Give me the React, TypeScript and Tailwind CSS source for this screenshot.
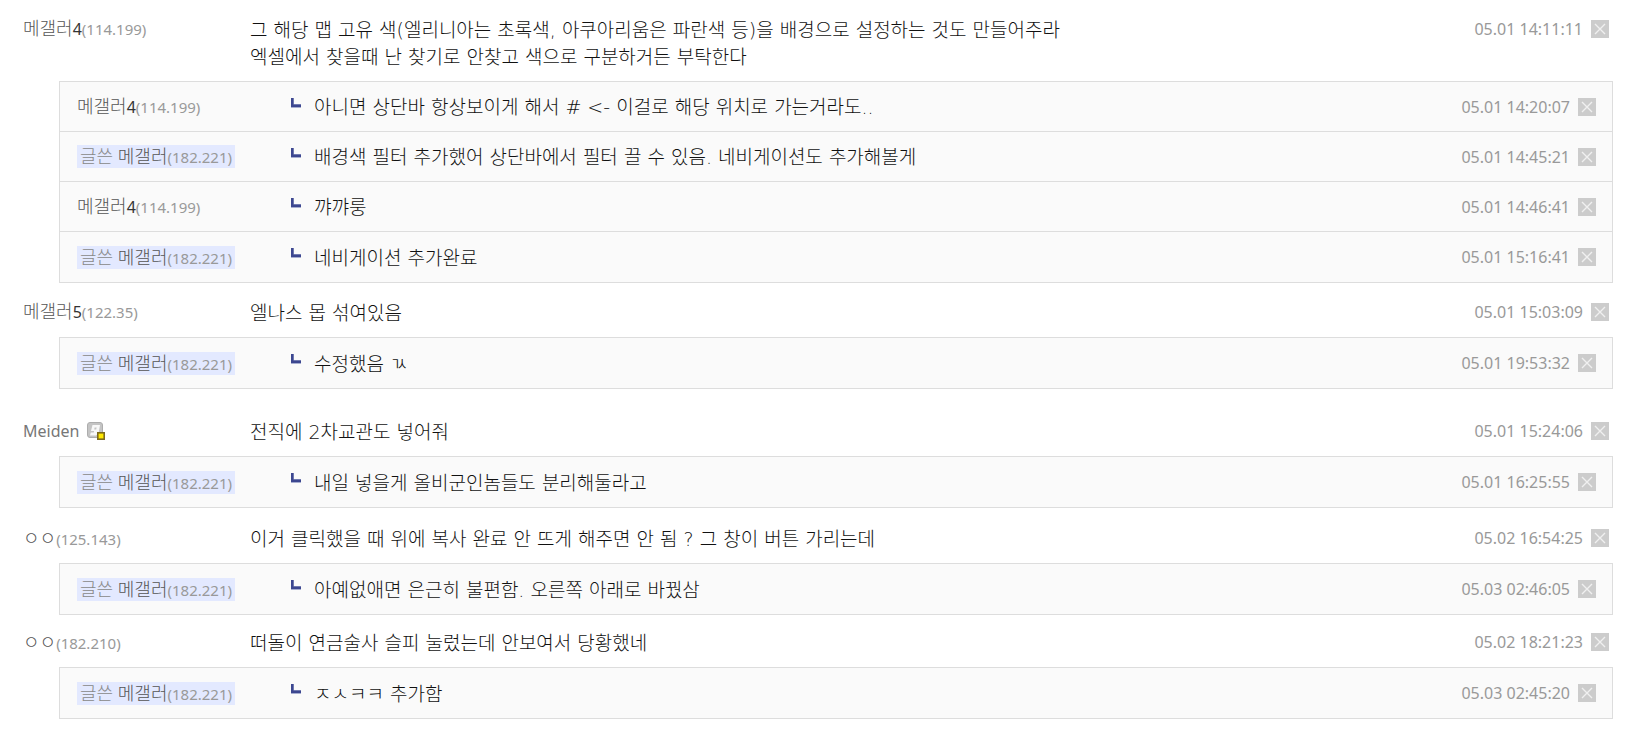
type Reply = {
  name: string;
  num?: string;
  ip: string;
  writer?: boolean;
  text: string;
  date: string;
};

type Comment = {
  name: string;
  num?: string;
  ip?: string;
  member?: boolean;
  lines: string[];
  date: string;
  space: string;
  replies: Reply[];
};

const comments: Comment[] = [
  {
    name: "메갤러",
    num: "4",
    ip: "(114.199)",
    lines: [
      "그 해당 맵 고유 색(엘리니아는 초록색, 아쿠아리움은 파란색 등)을 배경으로 설정하는 것도 만들어주라",
      "엑셀에서 찾을때 난 찾기로 안찾고 색으로 구분하거든 부탁한다",
    ],
    date: "05.01 14:11:11",
    space: "pt-4",
    replies: [
      {
        name: "메갤러",
        num: "4",
        ip: "(114.199)",
        text: "아니면 상단바 항상보이게 해서 # <- 이걸로 해당 위치로 가는거라도..",
        date: "05.01 14:20:07",
      },
      {
        name: "메갤러",
        ip: "(182.221)",
        writer: true,
        text: "배경색 필터 추가했어 상단바에서 필터 끌 수 있음. 네비게이션도 추가해볼게",
        date: "05.01 14:45:21",
      },
      {
        name: "메갤러",
        num: "4",
        ip: "(114.199)",
        text: "꺄꺄룽",
        date: "05.01 14:46:41",
      },
      {
        name: "메갤러",
        ip: "(182.221)",
        writer: true,
        text: "네비게이션 추가완료",
        date: "05.01 15:16:41",
      },
    ],
  },
  {
    name: "메갤러",
    num: "5",
    ip: "(122.35)",
    lines: ["엘나스 몹 섞여있음"],
    date: "05.01 15:03:09",
    space: "pt-4",
    replies: [
      {
        name: "메갤러",
        ip: "(182.221)",
        writer: true,
        text: "수정했음 ㄳ",
        date: "05.01 19:53:32",
      },
    ],
  },
  {
    name: "Meiden",
    member: true,
    lines: ["전직에 2차교관도 넣어줘"],
    date: "05.01 15:24:06",
    space: "pt-[29px]",
    replies: [
      {
        name: "메갤러",
        ip: "(182.221)",
        writer: true,
        text: "내일 넣을게 올비군인놈들도 분리해둘라고",
        date: "05.01 16:25:55",
      },
    ],
  },
  {
    name: "ㅇㅇ",
    ip: "(125.143)",
    lines: ["이거 클릭했을 때 위에 복사 완료 안 뜨게 해주면 안 됨 ? 그 창이 버튼 가리는데"],
    date: "05.02 16:54:25",
    space: "pt-[17px]",
    replies: [
      {
        name: "메갤러",
        ip: "(182.221)",
        writer: true,
        text: "아예없애면 은근히 불편함. 오른쪽 아래로 바꿨삼",
        date: "05.03 02:46:05",
      },
    ],
  },
  {
    name: "ㅇㅇ",
    ip: "(182.210)",
    lines: ["떠돌이 연금술사 슬피 눌렀는데 안보여서 당황했네"],
    date: "05.02 18:21:23",
    space: "pt-[14px]",
    replies: [
      {
        name: "메갤러",
        ip: "(182.221)",
        writer: true,
        text: "ㅈㅅㅋㅋ 추가함",
        date: "05.03 02:45:20",
      },
    ],
  },
];

const MemberIcon = () => (
  <svg width="18" height="18" viewBox="0 0 18 18" className="shrink-0">
    <rect x="0.5" y="0.5" width="15" height="15" rx="2.5" fill="#c4c4c4" stroke="#adadad" />
    <path d="M5.5 3H13l-1.5 8.5L9 13.5H3l.8-3h3l.3-1.5H4z" fill="#f8f8f8" />
    <path d="M7.6 5.5h2l-.4 2h-2z" fill="#c4c4c4" />
    <rect x="10.8" y="10.8" width="6.4" height="6.4" fill="#ffe900" stroke="#7d6a1c" strokeWidth="1.6" />
  </svg>
);

const ReplyMark = () => (
  <svg width="10" height="10" viewBox="0 0 10 10" className="mb-2 shrink-0">
    <path d="M0 0h3v6h7v4H0z" fill="#a7aed0" />
    <path d="M0 0h2.5v6.5H10v2.5H0z" fill="#3c4790" />
  </svg>
);

const Stamp = ({ date }: { date: string }) => (
  <div className="flex h-[26px] shrink-0 items-center gap-2 text-base text-[#999]">
    <time>{date}</time>
    <button type="button" aria-label="삭제" className="size-[18px] cursor-pointer bg-[#cccccc]">
      <svg width="18" height="18" viewBox="0 0 18 18">
        <path d="M4 4l10 10M14 4L4 14" stroke="#f0f0f0" strokeWidth="1.4" />
      </svg>
    </button>
  </div>
);

type AuthorProps = { name: string; num?: string; ip?: string; writer?: boolean; member?: boolean };

const Author = ({ name, num, ip, writer, member }: AuthorProps) => (
  <span className={writer ? "bg-[#e3e9ff] px-[3px] text-lg leading-[22px] font-light" : "text-lg leading-[22px] font-light"}>
    {writer && <span className="text-[#888]">글쓴 </span>}
    <span className={member ? "text-base font-normal text-[#777]" : "text-[#555]"}>{name}</span>
    {num && <span className="text-base font-normal text-[#333]">{num}</span>}
    {ip && <span className="text-[15px] font-normal text-[#999]">{ip}</span>}
  </span>
);

const App = () => {
  return (
    <main className="min-h-screen bg-white pr-5 pb-3 pl-[23px] font-['Noto_Sans','Noto_Sans_CJK_KR',sans-serif] text-[#111]">
      <ul>
        {comments.map((c) => (
          <li key={c.date} className={c.space}>
            <div className="flex items-start pr-1 pb-2.5">
              <div className="flex h-[26px] w-[227px] shrink-0 items-center gap-2">
                <Author name={c.name} num={c.num} ip={c.ip} member={c.member} />
                {c.member && <MemberIcon />}
              </div>
              <div className="flex-1 pt-px font-['DejaVu_Sans','Noto_Sans_CJK_KR',sans-serif] text-[19px] leading-[27px] font-light">
                {c.lines.map((line) => (
                  <p key={line}>{line}</p>
                ))}
              </div>
              <Stamp date={c.date} />
            </div>
            <ul className="ml-9 divide-y divide-[#dddddd] border border-[#dddddd] bg-[#fafafa]">
              {c.replies.map((r) => (
                <li key={r.date} className="flex min-h-[50px] items-center pr-4 pl-[17px]">
                  <div className="flex w-[214px] shrink-0 items-center">
                    <Author name={r.name} num={r.num} ip={r.ip} writer={r.writer} />
                  </div>
                  <div className="flex flex-1 items-center gap-[13px] font-['DejaVu_Sans','Noto_Sans_CJK_KR',sans-serif] text-[19px] leading-[27px] font-light">
                    <ReplyMark />
                    <p className="pt-0.5">{r.text}</p>
                  </div>
                  <Stamp date={r.date} />
                </li>
              ))}
            </ul>
          </li>
        ))}
      </ul>
    </main>
  );
};

export default App;
